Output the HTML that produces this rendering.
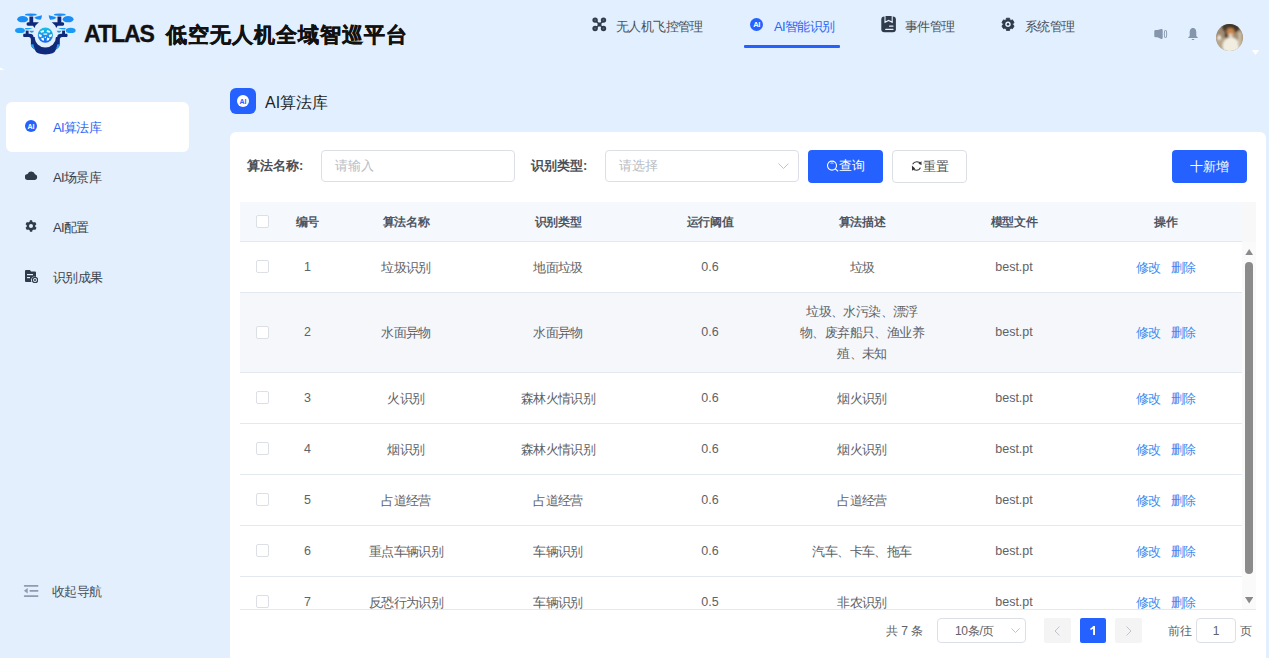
<!DOCTYPE html>
<html><head><meta charset="utf-8">
<style>
*{box-sizing:border-box;margin:0;padding:0}
html,body{width:1269px;height:658px;overflow:hidden}
body{position:relative;background:#e2effe;font-family:"Liberation Sans",sans-serif;color:#606266;font-size:13px}
.abs{position:absolute}
.hdr{left:0;top:0;width:1269px;height:70px;background:#e2effe}
.side{left:0;top:70px;width:229px;height:588px;background:#e3effc}
.title{left:84px;top:19px;font-size:23px;font-weight:bold;color:#111;white-space:nowrap;line-height:30px}
.nav{top:17px;height:16px;line-height:16px;font-size:13px;letter-spacing:-0.6px;color:#4a4f58;white-space:nowrap}
.nav svg{position:absolute}
.menu{left:6px;width:183px;height:50px;border-radius:6px}
.menu .t{position:absolute;left:47px;top:18px;line-height:16px;font-size:13px;letter-spacing:-0.6px;color:#3a3f4a;white-space:nowrap}
.menu svg{position:absolute;left:19px}
.card{left:230px;top:132px;width:1036px;height:540px;background:#fff;border-radius:6px}
.lbl{font-weight:bold;color:#4a4f58;font-size:13px;line-height:16px;white-space:nowrap}
.inp{border:1px solid #dcdfe6;border-radius:4px;background:#fff}
.ph{color:#b8bcc4;font-size:13px;line-height:16px;white-space:nowrap}
.btn{border-radius:4px;font-size:13px;color:#fff;background:#2461ff;text-align:center;line-height:33px;white-space:nowrap}
.th{top:202px;height:39px;background:#f5f9fe}
.cell{position:absolute;text-align:center;white-space:nowrap;font-size:13px;letter-spacing:-0.6px;color:#606266;margin-top:0px}
.hc{font-weight:bold;color:#4f5663;font-size:12px;letter-spacing:-0.3px;margin-top:0}
.cb{position:absolute;left:16px;width:13px;height:13px;border:1px solid #dcdfe6;border-radius:2px;background:#fff}
.line{left:240px;width:1002px;height:1px;background:#e4e9f0}
.lk{color:#3e8cf0}
.en{font-size:12.5px;letter-spacing:0;margin-top:0}
.r2{margin-top:0}
.pg{height:25px;top:618px;line-height:25px;font-size:12px;white-space:nowrap}
</style></head><body>
<div class="abs hdr"></div>
<div class="abs side"></div>
<svg class="abs" style="left:0;top:66px" width="6" height="5" viewBox="0 0 6 5"><path d="M0 1.5 Q3 3 5 3.6 Q3 4 0 4Z" fill="#fff"/></svg>

<!-- logo -->
<svg class="abs" style="left:15px;top:13px" width="61" height="42" viewBox="15 13 61 42">
 <defs><linearGradient id="gl" x1="0" y1="0" x2="0" y2="1"><stop offset="0" stop-color="#14c6e2"/><stop offset="1" stop-color="#1b62f0"/></linearGradient></defs>
 <g id="half">
  <ellipse cx="22.6" cy="19.2" rx="5.4" ry="3.15" fill="#1a8cf5"/>
  <ellipse cx="30.9" cy="14.7" rx="6" ry="1.2" fill="#1a8cf5"/>
  <path d="M34 17.8 Q38 16 42 15.2 Q41.8 18.5 40.5 19.8 Q37 20 34 17.8Z" fill="#1a8cf5"/>
  <rect x="29.4" y="16.5" width="3.8" height="7" fill="#0f2a7a"/>
  <path d="M26.5 24 Q26.5 22.2 28 22.2 H38.9 L35.5 25.5 L34.5 28.1 L33 25.7 H28 Q26.5 25.7 26.5 24Z" fill="#0f2a7a"/>
  <ellipse cx="20" cy="30.4" rx="4.9" ry="2.6" fill="#1a9af5"/>
  <path d="M24.9 28 H32.7 Q29 29.8 25.5 29.6Z" fill="#1aa0f5"/>
  <path d="M29 30.8 H34 Q33.5 32.7 31.5 32.7 Q30 32.5 29 30.8Z" fill="#1a9af5"/>
  <rect x="25.7" y="30.6" width="2.9" height="4" fill="#0f2a7a"/>
 </g>
 <use href="#half" transform="translate(90.7 0) scale(-1 1)"/>
 <path d="M23.5 33.8 H29.5 Q33.3 33.8 33.5 37 H57.2 Q57.4 33.8 61.2 33.8 H67.2 Q68 35.35 67.2 36.9 H62.2 Q59.8 36.9 59.8 40 V44 Q59.8 47 56 49.5 Q54.5 54.4 45.35 54.4 Q36.2 54.4 34.7 49.5 Q30.9 47 30.9 44 V40 Q30.9 36.9 28.5 36.9 H23.5 Q22.7 35.35 23.5 33.8Z" fill="#0f2a7a"/>
 <path d="M30.6 44.5 Q31.2 47.8 35.2 49 Q33.5 46.5 33.3 44.2Z" fill="#29a3f0"/>
 <path d="M60.1 44.5 Q59.5 47.8 55.5 49 Q57.2 46.5 57.4 44.2Z" fill="#29a3f0"/>
 <circle cx="45.35" cy="36.9" r="10.6" fill="#e2effe"/>
 <circle cx="45.35" cy="35.1" r="7.6" fill="url(#gl)"/>
 <g fill="#fff">
  <path d="M40.3 31.3 L43.5 30 L44.1 31.9 L41.1 32.8Z"/>
  <path d="M50.4 31.3 L47.2 30 L46.6 31.9 L49.6 32.8Z"/>
  <path d="M38.9 34 L41.8 35 L41.3 37.4 L38.8 36.2Z"/>
  <path d="M51.8 34 L48.9 35 L49.4 37.4 L51.9 36.2Z"/>
  <rect x="43.5" y="33.5" width="3.7" height="1.2"/>
  <path d="M41 38.4 L43.6 37.6 L44.1 40.7 L42.1 40.2Z"/>
  <path d="M49.7 38.4 L47.1 37.6 L46.6 40.7 L48.6 40.2Z"/>
  <circle cx="45.35" cy="37.3" r="0.7"/>
 </g>
</svg>
<div class="abs title"><span style="letter-spacing:-1px;-webkit-text-stroke:0.4px #111">ATLAS</span> <span style="font-size:21px;letter-spacing:1px;-webkit-text-stroke:0.5px #111;margin-left:6px">低空无人机全域智巡平台</span></div>

<!-- nav -->
<div class="abs nav" style="left:593px;width:120px">
  <svg style="left:-1px;top:-0.2px" width="15" height="15" viewBox="0 0 15 15"><path d="M3 3 L12 12 M12 3 L3 12" stroke="#2f3a4a" stroke-width="1.7"/><path d="M7.5 5.3 L9.7 7.5 L7.5 9.7 L5.3 7.5Z" fill="#2f3a4a"/><g fill="#2f3a4a"><circle cx="3.1" cy="3.1" r="2.7"/><circle cx="11.5" cy="3.1" r="2.7"/><circle cx="3.1" cy="11.5" r="2.7"/><circle cx="11.5" cy="11.5" r="2.7"/></g><g fill="#56606e"><circle cx="3.1" cy="3.1" r="1"/><circle cx="11.5" cy="3.1" r="1"/><circle cx="3.1" cy="11.5" r="1"/><circle cx="11.5" cy="11.5" r="1"/></g></svg>
  <span style="position:absolute;left:23px;top:2px">无人机飞控管理</span>
</div>
<div class="abs nav" style="left:750px;width:100px">
  <svg style="left:0;top:1px" width="13" height="13" viewBox="0 0 13 13"><circle cx="6.5" cy="6.5" r="6.5" fill="#2461ff"/><text x="6.5" y="9.3" font-size="7.5" font-weight="bold" fill="#fff" text-anchor="middle" font-family="Liberation Sans">AI</text></svg>
  <span style="position:absolute;left:24px;top:2px;color:#2a66f6">AI智能识别</span>
</div>
<div class="abs" style="left:744px;top:45px;width:96px;height:3px;background:#2461ff;border-radius:1px"></div>
<div class="abs nav" style="left:881px;width:100px">
  <svg style="left:0;top:-1px" width="16" height="17" viewBox="0 0 16 17"><rect x="0.3" y="0.4" width="14.6" height="15.9" rx="3" fill="#2f3a4a"/><path d="M4 0 V6.3 L7.6 4.4 L11.2 6.3 V0" fill="#2f3a4a" stroke="#e8f1fc" stroke-width="1.1"/><rect x="8" y="9.6" width="4.5" height="1.2" rx="0.5" fill="#e8f1fc"/><rect x="4.1" y="12.8" width="8.4" height="1.2" rx="0.5" fill="#e8f1fc"/></svg>
  <span style="position:absolute;left:24px;top:2px">事件管理</span>
</div>
<div class="abs nav" style="left:1001px;width:100px">
  <svg style="left:0;top:0px" width="14" height="15" viewBox="0 0 14 15"><path d="M5.24 2.73 L5.37 1.21 L8.63 1.21 L8.76 2.73 L10.08 3.49 L11.45 2.85 L13.09 5.67 L11.84 6.53 L11.84 8.07 L13.09 8.93 L11.45 11.75 L10.08 11.11 L8.76 11.87 L8.63 13.39 L5.37 13.39 L5.24 11.87 L3.92 11.11 L2.55 11.75 L0.91 8.93 L2.16 8.07 L2.16 6.53 L0.91 5.67 L2.55 2.85 L3.92 3.49Z" fill="#2f3a4a" stroke="#2f3a4a" stroke-width="0.9" stroke-linejoin="round"/><circle cx="7" cy="7.3" r="2.7" fill="#e2effd"/><circle cx="7" cy="7.3" r="1.2" fill="#2f3a4a"/></svg>
  <span style="position:absolute;left:24px;top:2px">系统管理</span>
</div>
<!-- right icons -->
<svg class="abs" style="left:1154px;top:28px" width="14" height="12" viewBox="0 0 14 12"><path d="M0.3 3.2 Q0.3 2 1.5 2 H3.5 L7.2 1 Q8.7 0.8 8.7 2.2 V9.8 Q8.7 11.2 7.2 11 L3.5 9.2 H1.5 Q0.3 9.2 0.3 8Z" fill="#8595ab"/><ellipse cx="11.5" cy="6" rx="1.2" ry="4" fill="none" stroke="#8595ab" stroke-width="0.9"/></svg>
<svg class="abs" style="left:1188px;top:28px" width="10" height="13" viewBox="0 0 10 13"><path d="M5 0 C2.3 0 1.7 2.5 1.7 4.5 V7.5 Q1.7 8.5 0.4 9.2 Q0 9.5 0.4 10 H9.6 Q10 9.5 9.6 9.2 Q8.3 8.5 8.3 7.5 V4.5 C8.3 2.5 7.7 0 5 0Z" fill="#8595ab"/><rect x="3.7" y="11" width="2.6" height="1.1" rx="0.5" fill="#8595ab"/></svg>
<svg class="abs" style="left:1216px;top:24px" width="27" height="27" viewBox="0 0 27 27"><defs><clipPath id="avc"><circle cx="13.5" cy="13.5" r="13.5"/></clipPath><filter id="avb" x="-20%" y="-20%" width="140%" height="140%"><feGaussianBlur stdDeviation="0.9"/></filter></defs>
<g clip-path="url(#avc)"><rect width="27" height="27" fill="#a08b72"/><g filter="url(#avb)">
<rect x="0" y="14" width="9" height="13" fill="#b8a58a"/>
<ellipse cx="15" cy="3" rx="9" ry="6" fill="#3f342b"/>
<rect x="9" y="2" width="5" height="12" fill="#4a3d30"/>
<ellipse cx="14.5" cy="7.5" rx="3.8" ry="3.6" fill="#c8864c"/>
<ellipse cx="14.5" cy="11.5" rx="2.3" ry="2.2" fill="#e6d2bd"/>
<ellipse cx="15" cy="22" rx="8.5" ry="9" fill="#f1ede0"/>
<ellipse cx="3.2" cy="13.5" rx="1.8" ry="2.4" fill="#f3efe6"/>
<rect x="22" y="8" width="4" height="14" fill="#c7b9a0"/>
</g></g></svg>
<svg class="abs" style="left:1252px;top:50px" width="7" height="5" viewBox="0 0 7 5"><path d="M0 0 H7 L3.5 5Z" fill="#fff"/></svg>

<!-- sidebar menu -->
<div class="abs menu" style="top:102px;background:#fff">
  <svg style="top:18px" width="12" height="12" viewBox="0 0 12 12"><circle cx="6" cy="6" r="6" fill="#2461ff"/><text x="6" y="8.6" font-size="7" font-weight="bold" fill="#fff" text-anchor="middle" font-family="Liberation Sans">AI</text></svg>
  <span class="t" style="color:#2a66f6">AI算法库</span>
</div>
<div class="abs menu" style="top:152px">
  <svg style="top:19px" width="13" height="9" viewBox="0 0 13 9"><path d="M3 9 A3 3 0 0 1 2.6 3 A4 4 0 0 1 10 3.2 A3 3 0 0 1 10 9Z" fill="#2f3a4a"/></svg>
  <span class="t">AI场景库</span>
</div>
<div class="abs menu" style="top:202px">
  <svg style="top:18px" width="12" height="12" viewBox="0 0 24 24"><path fill="#2f3a4a" d="M20.5 13.6a8.6 8.6 0 0 0 0-3.2l2.4-1.9-2.6-4.5-2.9 1.1a8.6 8.6 0 0 0-2.8-1.6L14.2.5H9.8l-.5 3a8.6 8.6 0 0 0-2.8 1.6L3.7 4 1.1 8.5l2.4 1.9a8.6 8.6 0 0 0 0 3.2l-2.4 1.9L3.7 20l2.9-1.1a8.6 8.6 0 0 0 2.8 1.6l.5 3h4.4l.5-3a8.6 8.6 0 0 0 2.8-1.6l2.9 1.1 2.6-4.5zM12 16a4 4 0 1 1 0-8 4 4 0 0 1 0 8z"/></svg>
  <span class="t">AI配置</span>
</div>
<div class="abs menu" style="top:252px">
  <svg style="top:18px" width="13" height="13" viewBox="0 0 13 13"><path d="M0 1 Q0 0 1 0 H5 L6 1.5 H10 Q11 1.5 11 2.5 V7 A3.5 3.5 0 0 0 6.5 12 H1 Q0 12 0 11Z" fill="#2f3a4a"/><rect x="2" y="4" width="6" height="1.2" fill="#e3effc"/><rect x="2" y="7" width="3" height="1.2" fill="#e3effc"/><circle cx="10" cy="10" r="2.6" fill="none" stroke="#2f3a4a" stroke-width="1.2"/><circle cx="10" cy="10" r="1" fill="#2f3a4a"/></svg>
  <span class="t">识别成果</span>
</div>
<svg class="abs" style="left:23px;top:584px" width="16" height="14" viewBox="0 0 16 14"><rect x="0.9" y="1.1" width="14.5" height="1.6" rx="0.6" fill="#8e9bb0"/><rect x="6.5" y="6" width="8.9" height="1.7" rx="0.6" fill="#8e9bb0"/><rect x="0.9" y="11.2" width="14.5" height="1.7" rx="0.6" fill="#8e9bb0"/><path d="M0.9 6.8 L4.7 4 V9.6Z" fill="#8e9bb0"/></svg>
<div class="abs" style="left:52px;top:584px;line-height:16px;color:#4a4f58;white-space:nowrap;font-size:13px;letter-spacing:-0.6px">收起导航</div>

<!-- page title -->
<div class="abs" style="left:230px;top:88px;width:26px;height:26px;border-radius:6px;background:#2461ff">
  <svg style="position:absolute;left:7px;top:7px" width="12" height="12" viewBox="0 0 12 12"><circle cx="6" cy="6" r="6" fill="#fff"/><text x="6" y="8.6" font-size="7" font-weight="bold" fill="#2461ff" text-anchor="middle" font-family="Liberation Sans">AI</text></svg>
</div>
<div class="abs" style="left:265px;top:93px;font-size:16px;line-height:19px;color:#1d1f24;white-space:nowrap">AI算法库</div>

<!-- card -->
<div class="abs card"></div>

<!-- search row -->
<div class="abs lbl" style="left:247px;top:158px">算法名称:</div>
<div class="abs inp" style="left:321px;top:150px;width:194px;height:32px"></div>
<div class="abs ph" style="left:335px;top:158px">请输入</div>
<div class="abs lbl" style="left:531px;top:158px">识别类型:</div>
<div class="abs inp" style="left:605px;top:150px;width:194px;height:32px"></div>
<div class="abs ph" style="left:619px;top:158px">请选择</div>
<svg class="abs" style="left:778px;top:163px" width="11" height="7" viewBox="0 0 11 7"><path d="M0.5 0.5 L5.5 5.5 L10.5 0.5" fill="none" stroke="#c0c4cc" stroke-width="1"/></svg>
<div class="abs btn" style="left:808px;top:150px;width:75px;height:33px"></div>
<svg class="abs" style="left:826px;top:160px" width="13" height="12" viewBox="0 0 13 12"><circle cx="6" cy="5.6" r="4.5" fill="none" stroke="#fff" stroke-width="1.1"/><path d="M9.3 8.9 L11.8 11" stroke="#fff" stroke-width="1.1" stroke-linecap="round"/><path d="M4.5 3.3 Q6 2.6 7.5 3.3" stroke="#fff" stroke-width="0.8" fill="none"/></svg>
<div class="abs" style="left:839px;top:158px;color:#fff;line-height:16px">查询</div>
<div class="abs inp" style="left:892px;top:150px;width:75px;height:33px"></div>
<svg class="abs" style="left:911px;top:160px" width="12" height="12" viewBox="0 0 12 12"><path d="M1.6 4.3 Q3 1.8 5.8 1.8 Q8.6 1.8 9.8 3.8" fill="none" stroke="#333" stroke-width="1.1"/><path d="M10.4 1.2 L10.6 5 L7.4 3.8Z" fill="#333"/><path d="M9.4 7.6 Q8.4 10.2 5.6 10.2 Q2.8 10.2 1.8 8" fill="none" stroke="#333" stroke-width="1.1"/><path d="M0.9 5.4 L1.1 10.8 L4.2 8.6Z" fill="#333"/></svg>
<div class="abs" style="left:923px;top:159px;color:#4a4f58;line-height:16px">重置</div>
<div class="abs btn" style="left:1172px;top:150px;width:75px;height:33px">十新增</div>

<!-- table -->
<div class="abs th" style="left:240px;width:1002px"></div>
<div class="abs" style="left:1242px;top:202px;width:14px;height:40px;background:#f8f8f8"></div>
<div class="abs" style="left:1242px;top:242px;width:14px;height:367px;background:#fafafa"></div>
<div class="abs line" style="top:241px"></div>
<!-- TABLEGEN -->
<div class="abs cb" style="left:256px;top:215px"></div>
<div class="cell hc" style="left:285px;width:45px;top:215px;line-height:15px">编号</div>
<div class="cell hc" style="left:330px;width:152px;top:215px;line-height:15px">算法名称</div>
<div class="cell hc" style="left:482px;width:152px;top:215px;line-height:15px">识别类型</div>
<div class="cell hc" style="left:634px;width:152px;top:215px;line-height:15px">运行阈值</div>
<div class="cell hc" style="left:786px;width:152px;top:215px;line-height:15px">算法描述</div>
<div class="cell hc" style="left:938px;width:152px;top:215px;line-height:15px">模型文件</div>
<div class="cell hc" style="left:1090px;width:152px;top:215px;line-height:15px">操作</div>
<div class="abs" style="left:240px;top:242px;width:1016px;height:367px;overflow:hidden">
<div class="abs" style="left:0;top:0px;width:1002px;height:50px;background:#fff"></div>
<div class="abs" style="left:0;top:50px;width:1002px;height:1px;background:#e4e9f0"></div>
<div class="cb" style="left:16px;top:18px"></div>
<div class="cell en" style="left:45px;width:45px;top:14.5px;line-height:21px">1</div>
<div class="cell" style="left:90px;width:152px;top:14.5px;line-height:21px">垃圾识别</div>
<div class="cell" style="left:242px;width:152px;top:14.5px;line-height:21px">地面垃圾</div>
<div class="cell en" style="left:394px;width:152px;top:14.5px;line-height:21px">0.6</div>
<div class="cell" style="left:546px;width:152px;top:14.5px;line-height:21px">垃圾</div>
<div class="cell en" style="left:698px;width:152px;top:14.5px;line-height:21px">best.pt</div>
<div class="cell lk" style="left:896px;width:40px;text-align:left;top:14.5px;line-height:21px">修改</div>
<div class="cell lk" style="left:931px;width:40px;text-align:left;top:14.5px;line-height:21px">删除</div>
<div class="abs" style="left:0;top:51px;width:1002px;height:79px;background:#f5f7fb"></div>
<div class="abs" style="left:0;top:130px;width:1002px;height:1px;background:#e4e9f0"></div>
<div class="cb" style="left:16px;top:84px"></div>
<div class="cell en" style="left:45px;width:45px;top:80.0px;line-height:21px">2</div>
<div class="cell r2" style="left:90px;width:152px;top:80.0px;line-height:21px">水面异物</div>
<div class="cell r2" style="left:242px;width:152px;top:80.0px;line-height:21px">水面异物</div>
<div class="cell en" style="left:394px;width:152px;top:80.0px;line-height:21px">0.6</div>
<div class="cell r2" style="left:546px;width:152px;top:59.0px;line-height:21px">垃圾、水污染、漂浮<br>物、废弃船只、渔业养<br>殖、未知</div>
<div class="cell en" style="left:698px;width:152px;top:80.0px;line-height:21px">best.pt</div>
<div class="cell lk r2" style="left:896px;width:40px;text-align:left;top:80.0px;line-height:21px">修改</div>
<div class="cell lk r2" style="left:931px;width:40px;text-align:left;top:80.0px;line-height:21px">删除</div>
<div class="abs" style="left:0;top:131px;width:1002px;height:50px;background:#fff"></div>
<div class="abs" style="left:0;top:181px;width:1002px;height:1px;background:#e4e9f0"></div>
<div class="cb" style="left:16px;top:149px"></div>
<div class="cell en" style="left:45px;width:45px;top:145.5px;line-height:21px">3</div>
<div class="cell" style="left:90px;width:152px;top:145.5px;line-height:21px">火识别</div>
<div class="cell" style="left:242px;width:152px;top:145.5px;line-height:21px">森林火情识别</div>
<div class="cell en" style="left:394px;width:152px;top:145.5px;line-height:21px">0.6</div>
<div class="cell" style="left:546px;width:152px;top:145.5px;line-height:21px">烟火识别</div>
<div class="cell en" style="left:698px;width:152px;top:145.5px;line-height:21px">best.pt</div>
<div class="cell lk" style="left:896px;width:40px;text-align:left;top:145.5px;line-height:21px">修改</div>
<div class="cell lk" style="left:931px;width:40px;text-align:left;top:145.5px;line-height:21px">删除</div>
<div class="abs" style="left:0;top:182px;width:1002px;height:50px;background:#fff"></div>
<div class="abs" style="left:0;top:232px;width:1002px;height:1px;background:#e4e9f0"></div>
<div class="cb" style="left:16px;top:200px"></div>
<div class="cell en" style="left:45px;width:45px;top:196.5px;line-height:21px">4</div>
<div class="cell" style="left:90px;width:152px;top:196.5px;line-height:21px">烟识别</div>
<div class="cell" style="left:242px;width:152px;top:196.5px;line-height:21px">森林火情识别</div>
<div class="cell en" style="left:394px;width:152px;top:196.5px;line-height:21px">0.6</div>
<div class="cell" style="left:546px;width:152px;top:196.5px;line-height:21px">烟火识别</div>
<div class="cell en" style="left:698px;width:152px;top:196.5px;line-height:21px">best.pt</div>
<div class="cell lk" style="left:896px;width:40px;text-align:left;top:196.5px;line-height:21px">修改</div>
<div class="cell lk" style="left:931px;width:40px;text-align:left;top:196.5px;line-height:21px">删除</div>
<div class="abs" style="left:0;top:233px;width:1002px;height:50px;background:#fff"></div>
<div class="abs" style="left:0;top:283px;width:1002px;height:1px;background:#e4e9f0"></div>
<div class="cb" style="left:16px;top:251px"></div>
<div class="cell en" style="left:45px;width:45px;top:247.5px;line-height:21px">5</div>
<div class="cell" style="left:90px;width:152px;top:247.5px;line-height:21px">占道经营</div>
<div class="cell" style="left:242px;width:152px;top:247.5px;line-height:21px">占道经营</div>
<div class="cell en" style="left:394px;width:152px;top:247.5px;line-height:21px">0.6</div>
<div class="cell" style="left:546px;width:152px;top:247.5px;line-height:21px">占道经营</div>
<div class="cell en" style="left:698px;width:152px;top:247.5px;line-height:21px">best.pt</div>
<div class="cell lk" style="left:896px;width:40px;text-align:left;top:247.5px;line-height:21px">修改</div>
<div class="cell lk" style="left:931px;width:40px;text-align:left;top:247.5px;line-height:21px">删除</div>
<div class="abs" style="left:0;top:284px;width:1002px;height:50px;background:#fff"></div>
<div class="abs" style="left:0;top:334px;width:1002px;height:1px;background:#e4e9f0"></div>
<div class="cb" style="left:16px;top:302px"></div>
<div class="cell en" style="left:45px;width:45px;top:298.5px;line-height:21px">6</div>
<div class="cell" style="left:90px;width:152px;top:298.5px;line-height:21px">重点车辆识别</div>
<div class="cell" style="left:242px;width:152px;top:298.5px;line-height:21px">车辆识别</div>
<div class="cell en" style="left:394px;width:152px;top:298.5px;line-height:21px">0.6</div>
<div class="cell" style="left:546px;width:152px;top:298.5px;line-height:21px">汽车、卡车、拖车</div>
<div class="cell en" style="left:698px;width:152px;top:298.5px;line-height:21px">best.pt</div>
<div class="cell lk" style="left:896px;width:40px;text-align:left;top:298.5px;line-height:21px">修改</div>
<div class="cell lk" style="left:931px;width:40px;text-align:left;top:298.5px;line-height:21px">删除</div>
<div class="abs" style="left:0;top:335px;width:1002px;height:50px;background:#fff"></div>
<div class="abs" style="left:0;top:385px;width:1002px;height:1px;background:#e4e9f0"></div>
<div class="cb" style="left:16px;top:353px"></div>
<div class="cell en" style="left:45px;width:45px;top:349.5px;line-height:21px">7</div>
<div class="cell" style="left:90px;width:152px;top:349.5px;line-height:21px">反恐行为识别</div>
<div class="cell" style="left:242px;width:152px;top:349.5px;line-height:21px">车辆识别</div>
<div class="cell en" style="left:394px;width:152px;top:349.5px;line-height:21px">0.5</div>
<div class="cell" style="left:546px;width:152px;top:349.5px;line-height:21px">非农识别</div>
<div class="cell en" style="left:698px;width:152px;top:349.5px;line-height:21px">best.pt</div>
<div class="cell lk" style="left:896px;width:40px;text-align:left;top:349.5px;line-height:21px">修改</div>
<div class="cell lk" style="left:931px;width:40px;text-align:left;top:349.5px;line-height:21px">删除</div>
</div>
<svg class="abs" style="left:1245px;top:248.5px" width="8.4" height="6.5" viewBox="0 0 8.4 6.5"><path d="M4.2 0 L8.4 6.5 H0Z" fill="#8a8a8a"/></svg>
<div class="abs" style="left:1245px;top:262px;width:8px;height:312px;border-radius:4px;background:#8b8b8b"></div>
<svg class="abs" style="left:1245px;top:597px" width="8.4" height="6.5" viewBox="0 0 8.4 6.5"><path d="M0 0 H8.4 L4.2 6.5Z" fill="#8a8a8a"/></svg>
<div class="abs" style="left:240px;top:609px;width:1016px;height:1px;background:#e4e9f0"></div>
<div class="abs pg" style="left:886px;top:619px;color:#606266">共 7 条</div>
<div class="abs inp pg" style="left:937px;width:89px"></div>
<div class="abs pg" style="left:955px;top:619px;color:#606266;letter-spacing:-0.3px">10条/页</div>
<svg class="abs" style="left:1011px;top:628px" width="9" height="6" viewBox="0 0 9 6"><path d="M0.5 0.5 L4.5 4.5 L8.5 0.5" fill="none" stroke="#c0c4cc" stroke-width="1"/></svg>
<div class="abs pg" style="left:1044px;width:27px;background:#f4f4f5;border-radius:2px"></div>
<svg class="abs" style="left:1054px;top:626px" width="6" height="10" viewBox="0 0 6 10"><path d="M5.5 0.5 L1 5 L5.5 9.5" fill="none" stroke="#c0c4cc" stroke-width="1"/></svg>
<div class="abs pg" style="left:1080px;width:26px;background:#2461ff;border-radius:2px"></div>
<svg class="abs" style="left:1089px;top:625px" width="8" height="11" viewBox="0 0 8 11"><path d="M4.1 1 H6 V10 H4.1 V3.8 Q3 4.6 1.4 4.9 V3.3 Q3.2 2.7 4.1 1Z" fill="#fff"/></svg>
<div class="abs pg" style="left:1115px;width:27px;background:#f4f4f5;border-radius:2px"></div>
<svg class="abs" style="left:1126px;top:626px" width="6" height="10" viewBox="0 0 6 10"><path d="M0.5 0.5 L5 5 L0.5 9.5" fill="none" stroke="#c0c4cc" stroke-width="1"/></svg>
<div class="abs pg" style="left:1168px;top:619px;color:#606266">前往</div>
<div class="abs inp pg" style="left:1196px;width:40px;text-align:center;color:#606266">1</div>
<div class="abs pg" style="left:1240px;top:619px;color:#606266">页</div>
<!-- /TABLEGEN -->
</body></html>
